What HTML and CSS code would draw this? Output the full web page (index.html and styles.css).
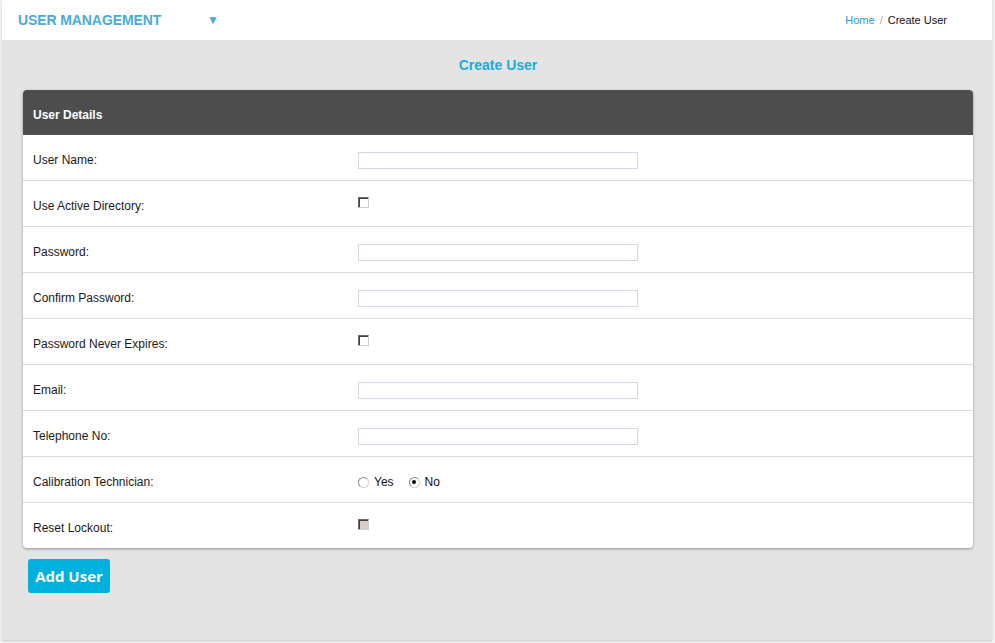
FILE: index.html
```html
<!DOCTYPE html>
<html>
<head>
<meta charset="utf-8">
<link rel="stylesheet" href="styles.css">
</head>
<body>
<div class="main">
  <header class="topbar">
    <div class="brand">USER MANAGEMENT <span class="caret">&#9660;</span></div>
    <nav class="crumbs"><a class="crumb-link">Home</a><span class="sep">/</span><span class="crumb-current">Create User</span></nav>
  </header>
  <section class="content">
    <h1 class="page-title">Create User</h1>
    <div class="card">
      <div class="card-head">User Details</div>
      <div class="row"><div class="label">User Name:</div><div class="field"><input class="text" type="text"></div></div>
      <div class="row"><div class="label">Use Active Directory:</div><div class="field"><span class="cb"></span></div></div>
      <div class="row"><div class="label">Password:</div><div class="field"><input class="text" type="password"></div></div>
      <div class="row"><div class="label">Confirm Password:</div><div class="field"><input class="text" type="password"></div></div>
      <div class="row"><div class="label">Password Never Expires:</div><div class="field"><span class="cb"></span></div></div>
      <div class="row"><div class="label">Email:</div><div class="field"><input class="text" type="text"></div></div>
      <div class="row"><div class="label">Telephone No:</div><div class="field"><input class="text" type="text"></div></div>
      <div class="row"><div class="label">Calibration Technician:</div><div class="field radios"><span class="radio"></span><span class="rlabel">Yes</span><span class="radio checked"></span><span class="rlabel">No</span></div></div>
      <div class="row last"><div class="label">Reset Lockout:</div><div class="field"><span class="cb disabled"></span></div></div>
    </div>
    <button class="btn">Add User</button>
  </section>
</div>
</body>
</html>
```

FILE: styles.css
```css
html, body { margin: 0; padding: 0; }
body {
  background: #f3f3f3;
  font-family: "Liberation Sans", Arial, sans-serif;
  width: 995px;
  height: 643px;
  overflow: hidden;
}
.main {
  margin-left: 2px;
  width: 990px;
  height: 640px;
  background: #e4e4e4;
  box-shadow: 0 1px 2px rgba(0,0,0,0.18);
  display: flex;
  flex-direction: column;
}
.topbar {
  height: 40px;
  background: #fff;
  display: flex;
  align-items: center;
  justify-content: space-between;
  padding: 0 45px 0 16px;
  box-sizing: border-box;
}
.brand {
  font-size: 14px;
  font-weight: bold;
  color: #4aabd9;
  letter-spacing: -0.1px;
}
.caret {
  font-size: 12px;
  margin-left: 42px;
  position: relative;
  top: -1px;
}
.crumbs { font-size: 11px; }
.crumb-link { color: #1b9ed9; }
.sep { color: #aaa; margin: 0 5px; }
.crumb-current { color: #111; }
.content {
  flex: 1;
  padding: 0 19px 0 21px;
}
.page-title {
  margin: 0;
  height: 50px;
  display: flex;
  align-items: center;
  justify-content: center;
  font-size: 14px;
  font-weight: bold;
  color: #17aedb;
  padding-bottom: 1px;
  box-sizing: border-box;
}
.card {
  background: #fff;
  border-radius: 4px;
  box-shadow: 0 1px 3px rgba(0,0,0,0.35);
  overflow: hidden;
}
.card-head {
  height: 45px;
  box-sizing: border-box;
  padding-top: 4px;
  background: #4d4d4d;
  color: #fff;
  font-size: 12px;
  font-weight: bold;
  display: flex;
  align-items: center;
  padding-left: 10px;
}
.row {
  height: 46px;
  box-sizing: border-box;
  padding-top: 5px;
  border-bottom: 1px solid #dcdcdc;
  display: grid;
  grid-template-columns: 335px 1fr;
  align-items: center;
}
.row.last { border-bottom: none; height: 45px; }
.label {
  padding-left: 10px;
  font-size: 12px;
  color: #1a1a1a;
}
.field { display: flex; align-items: center; }
.text {
  width: 280px;
  height: 17px;
  box-sizing: border-box;
  border: 1px solid #d3d7e6;
  padding: 0;
  margin: 0;
  background: #fff;
  outline: none;
}
.cb {
  display: inline-block;
  width: 11px;
  height: 11px;
  box-sizing: border-box;
  border-top: 1px solid #6a6a6a;
  border-left: 1px solid #6a6a6a;
  border-right: 1px solid #d4d0c8;
  border-bottom: 1px solid #d4d0c8;
  box-shadow: inset 1px 1px 0 #404040;
  background: #fff;
  margin-top: -8px;
}
.cb.disabled { background: #d4d0c8; }
.radios { font-size: 12px; color: #111; }
.radio {
  display: inline-block;
  width: 11px;
  height: 11px;
  box-sizing: border-box;
  border-radius: 50%;
  border: 1px solid #8a8a8a;
  border-right-color: #d4d0c8;
  border-bottom-color: #d4d0c8;
  background: #fff;
  position: relative;
}
.radio.checked::after {
  content: "";
  position: absolute;
  left: 2.5px;
  top: 2.5px;
  width: 4px;
  height: 4px;
  border-radius: 50%;
  background: #000;
}
.rlabel { margin-left: 5px; margin-right: 15px; }
.btn {
  margin: 11px 0 0 5px;
  width: 82px;
  height: 34px;
  background: #00b1dd;
  color: #fff;
  border: none;
  border-radius: 3px;
  font-family: "Open Sans", sans-serif;
  font-weight: 700;
  font-size: 15px;
  padding: 0;
}
```
